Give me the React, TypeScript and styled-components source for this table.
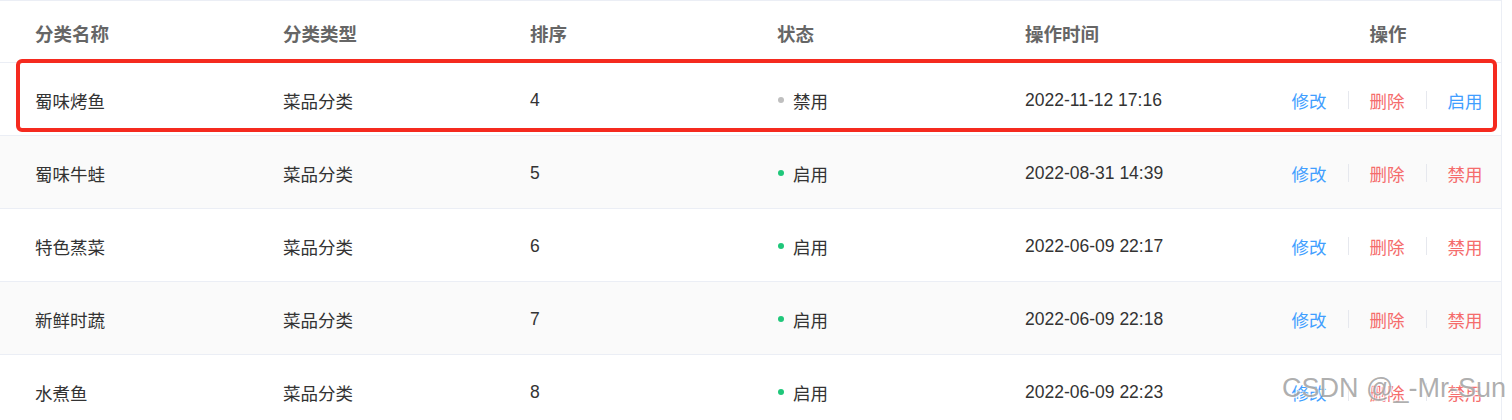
import styled, { createGlobalStyle } from 'styled-components'

type Category = {
  name: string
  type: string
  sort: number
  enabled: boolean
  updatedAt: string
}

const rows: Category[] = [
  { name: '蜀味烤鱼', type: '菜品分类', sort: 4, enabled: false, updatedAt: '2022-11-12 17:16' },
  { name: '蜀味牛蛙', type: '菜品分类', sort: 5, enabled: true, updatedAt: '2022-08-31 14:39' },
  { name: '特色蒸菜', type: '菜品分类', sort: 6, enabled: true, updatedAt: '2022-06-09 22:17' },
  { name: '新鲜时蔬', type: '菜品分类', sort: 7, enabled: true, updatedAt: '2022-06-09 22:18' },
  { name: '水煮鱼', type: '菜品分类', sort: 8, enabled: true, updatedAt: '2022-06-09 22:23' },
]

const GlobalStyle = createGlobalStyle`
  html, body {
    margin: 0;
    background: #fff;
  }
  body {
    font-family: "Liberation Sans", "Noto Sans CJK SC", sans-serif;
    color: #333;
  }
`

const Page = styled.div`
  position: relative;
  width: 1512px;
  height: 420px;
  overflow: hidden;
`

const Table = styled.div`
  width: 1501px;
  border-top: 1px solid #ebeef5;
  border-right: 1px solid #ebeef5;
`

const Row = styled.div<{ $header?: boolean; $striped?: boolean }>`
  display: grid;
  grid-template-columns: 248px 247px 247px 248px 250px 1fr;
  align-items: center;
  padding-left: 35px;
  height: ${(p) => (p.$header ? '61px' : '72px')};
  border-bottom: 1px solid #ebeef5;
  background: ${(p) => (p.$striped ? '#fafafa' : '#fff')};
  font-size: 17.5px;
`

const HeadCell = styled.div<{ $center?: boolean }>`
  font-size: 18.5px;
  font-weight: 700;
  color: #666;
  text-align: ${(p) => (p.$center ? 'center' : 'left')};
  padding-top: 2px;
`

const Cell = styled.div`
  color: #333;
  white-space: nowrap;
  padding-top: 2px;
`

const Status = styled.div`
  display: flex;
  align-items: center;
  gap: 9px;
  color: #333;
  padding-top: 2px;
`

const Dot = styled.span<{ $on: boolean }>`
  width: 6px;
  height: 6px;
  border-radius: 50%;
  margin-left: 1px;
  background: ${(p) => (p.$on ? '#1fc77a' : '#bfbfbf')};
`

const Actions = styled.div`
  display: flex;
  align-items: center;
  justify-content: center;
  padding-top: 2px;
  padding-right: 2px;
`

const Link = styled.span<{ $tone: 'blue' | 'red' }>`
  color: ${(p) => (p.$tone === 'blue' ? '#419eff' : '#f56c6c')};
  cursor: pointer;
`

const Divider = styled.span`
  width: 1px;
  height: 18px;
  margin: 0 21px;
  background: #e6e8ee;
`

const Highlight = styled.div`
  position: absolute;
  left: 16px;
  top: 59px;
  width: 1481px;
  height: 73px;
  box-sizing: border-box;
  border: 4px solid #f52a1f;
  border-radius: 6px;
  pointer-events: none;
`

const Watermark = styled.div`
  position: absolute;
  left: 1282px;
  top: 373px;
  font-family: "Liberation Sans", sans-serif;
  font-size: 27px;
  color: rgba(140, 140, 140, 0.7);
  text-shadow: 1px 1px 1px rgba(255, 255, 255, 0.9), -1px -1px 1px rgba(255, 255, 255, 0.6);
  white-space: nowrap;
  pointer-events: none;
`

export default function App() {
  return (
    <Page>
      <GlobalStyle />
      <Table>
        <Row $header>
          <HeadCell>分类名称</HeadCell>
          <HeadCell>分类类型</HeadCell>
          <HeadCell>排序</HeadCell>
          <HeadCell>状态</HeadCell>
          <HeadCell>操作时间</HeadCell>
          <HeadCell $center>操作</HeadCell>
        </Row>
        {rows.map((row, i) => (
          <Row key={row.name} $striped={i % 2 === 1}>
            <Cell>{row.name}</Cell>
            <Cell>{row.type}</Cell>
            <Cell>{row.sort}</Cell>
            <Status>
              <Dot $on={row.enabled} />
              {row.enabled ? '启用' : '禁用'}
            </Status>
            <Cell>{row.updatedAt}</Cell>
            <Actions>
              <Link $tone="blue">修改</Link>
              <Divider />
              <Link $tone="red">删除</Link>
              <Divider />
              <Link $tone={row.enabled ? 'red' : 'blue'}>{row.enabled ? '禁用' : '启用'}</Link>
            </Actions>
          </Row>
        ))}
      </Table>
      <Highlight />
      <Watermark>CSDN @_-Mr-Sun</Watermark>
    </Page>
  )
}
